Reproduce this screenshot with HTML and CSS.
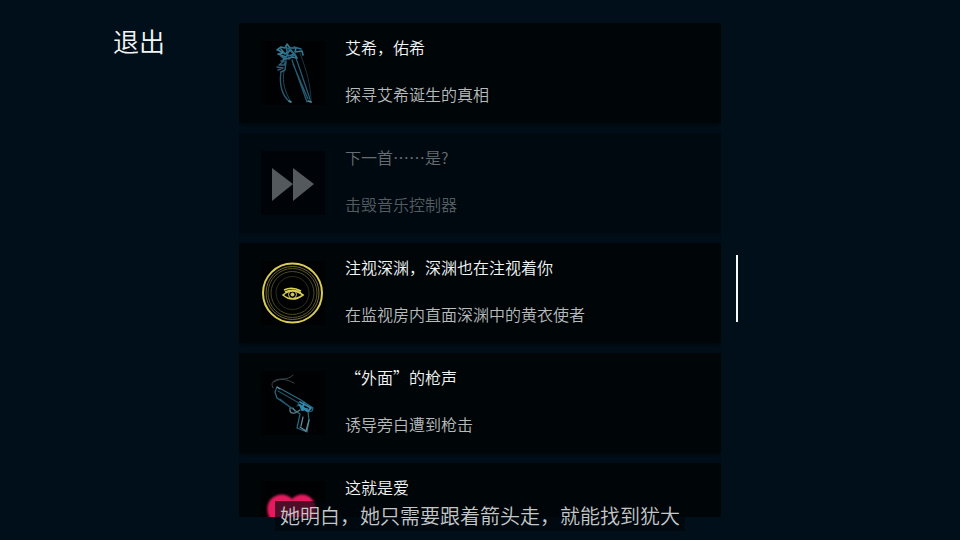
FILE: index.html
```html
<!DOCTYPE html>
<html lang="zh-CN">
<head>
<meta charset="utf-8">
<meta name="viewport" content="width=device-width, initial-scale=1">
<title>成就</title>
<link rel="stylesheet" href="styles.css">
</head>
<body>
<main class="screen">
  <nav class="side"><button class="exit" type="button">退出</button></nav>
  <ul class="list">
    <li class="card">
      <svg class="icon" viewBox="0 0 64 64" aria-hidden="true">
        <g fill="none" stroke="#245a72" stroke-linecap="round" stroke-linejoin="round">
          <path d="M20 31C18 43 21 55 29 61" stroke-width="1.4"/>
          <path d="M23 30C21 42 24 51 30 61" stroke="#1f4759"/>
          <path d="M31 19L46 61M35 17L50 61M32 23L47 58" stroke-width="1.3"/>
          <path d="M39 12C46 31 50 45 50 61" stroke="#1b3541"/>
          <path d="M16 9L20 6L24 7L26 3L29 7L35 7L34 11L41 10L42 14M17 9L22 12L17 13L25 16L22 19L31 16L36 17L30 9L24 13L20 8" stroke="#347891" stroke-width="1.6"/>
          <path d="M25 5L27 15L34 13L28 18M20 15L24 18L28 10M27 7L35 15M33 6L40 8" stroke="#2b6b87" stroke-width="1.6"/>
          <path d="M20 20L23 20L18 24L23 24L25 20L24 29L20 31M16 26L22 27L17 29" stroke="#2c6078" stroke-width="1.5"/>
          <path d="M28 60L30 61M47 60L50 61" stroke="#56879b" stroke-width="1.6"/>
        </g>
      </svg>
      <div class="text"><h2>艾希，佑希</h2><p>探寻艾希诞生的真相</p></div>
    </li>
    <li class="card card-locked">
      <svg class="icon" viewBox="0 0 64 64" aria-hidden="true">
        <path d="M11 17V50L32 33ZM32 17V50L53 33Z" fill="#53595c"/>
      </svg>
      <div class="text"><h2>下一首……是?</h2><p>击毁音乐控制器</p></div>
    </li>
    <li class="card">
      <svg class="icon" viewBox="0 0 64 64" aria-hidden="true">
        <g fill="none" stroke="#d9cd56">
          <circle cx="31.5" cy="32" r="29.5" stroke-width="2"/>
          <circle cx="31.5" cy="32" r="26.5" stroke="#756d31"/>
          <circle cx="31.5" cy="32" r="24.5" stroke="#5c5628"/>
          <circle cx="31.5" cy="32" r="21.5" stroke="#4f4b25"/>
          <circle cx="31.5" cy="32" r="16.5" stroke="#312f19"/>
          <path d="M22 34Q31 26 42 34Q31 42 22 34Z" stroke-width="1.6"/>
          <path d="M23 29Q31 25 40 30M24 31Q32 27 40 32" stroke-width="1.6"/>
          <circle cx="31.5" cy="33.5" r="4"/>
          <circle cx="31.5" cy="33.5" r="1.5" fill="#d9cd56"/>
        </g>
      </svg>
      <div class="text"><h2>注视深渊，深渊也在注视着你</h2><p>在监视房内直面深渊中的黄衣使者</p></div>
    </li>
    <li class="card">
      <svg class="icon" viewBox="0 0 64 64" aria-hidden="true">
        <g fill="none" stroke="#286b84" stroke-width="1.2" stroke-linecap="round" stroke-linejoin="round">
          <path d="M14 21L16 16L20 18L40 29L52 37L51 40L47 41L48 49L46 61L36 57L39 43L32 38L16 27Z"/>
          <path d="M17 20L38 32L36 35M19 28L30 37" stroke="#1e5268"/>
          <path d="M29 37Q28 43 34 42L39 39M32 37L34 40" stroke="#5c8393"/>
          <path d="M39 31L50 37L47 40L39 34L41 39L46 38M38 34L46 40M43 32L41 39" stroke="#2e8baf" stroke-width="1.8"/>
          <path d="M42 46L40 55M16 16L19 18M39 56L45 60L48 49" stroke="#6c8b99"/>
          <path d="M12 17C8 10 16 8 21 8S29 7 32 4M13 11C20 6 27 9 33 12" stroke="#39454a" stroke-width="1"/>
        </g>
      </svg>
      <div class="text"><h2>“外面”的枪声</h2><p>诱导旁白遭到枪击</p></div>
    </li>
    <li class="card">
      <svg class="icon" viewBox="0 0 64 64" aria-hidden="true">
        <path class="heart" d="M31 18C26 12 16 12 10 18C2 27 8 40 17 48L31 60L45 48C55 40 59 27 51 18C46 12 36 12 31 18Z" fill="#e51a5f"/>
      </svg>
      <div class="text"><h2>这就是爱</h2></div>
    </li>
  </ul>
  <div class="track"><div class="thumb"></div></div>
</main>
<p class="subtitle">她明白，她只需要跟着箭头走，就能找到犹大</p>
</body>
</html>
```
FILE: styles.css
```css
* { box-sizing: border-box; }

body {
  margin: 0;
  background: #000f1a;
  color: #f2f5f5;
  font-family: "Noto Sans CJK SC", sans-serif;
  font-weight: 350;
}

.screen {
  display: grid;
  grid-template-columns: 1fr minmax(0, 482px) 1fr;
  height: 100vh;
  padding: 23px 0;
}

.side {
  padding-left: 113px;
}

.exit {
  padding: 0;
  border: 0;
  background: none;
  color: inherit;
  font: inherit;
  font-size: 26px;
  line-height: 36px;
}

.list {
  display: flex;
  flex-direction: column;
  gap: 10px;
  min-height: 0;
  margin: 0;
  padding: 0;
  overflow: hidden;
  list-style: none;
}

.card {
  display: flex;
  flex: none;
  gap: 20px;
  padding: 18px 22px;
  background: #000508;
  box-shadow: 0 2px 4px #00070c;
}

.icon {
  flex: none;
  width: 64px;
  height: 64px;
  background: #000102;
}

.heart {
  filter: blur(1px);
}

.text {
  display: flex;
  flex-direction: column;
  gap: 23px;
  margin: -6px 0;
}

.text h2,
.text p {
  margin: 0;
  font-size: 16px;
  font-weight: inherit;
  line-height: 24px;
}

.text p {
  color: #b7bbbc;
}

.card-locked {
  background: #00090f;
  box-shadow: 0 2px 4px #000b13;
}

.card-locked .icon {
  background: #000408;
}

.card-locked h2 {
  color: #656d71;
}

.card-locked p {
  color: #535c61;
}

.track {
  display: grid;
  grid-template-rows: 232px 67px;
  padding-left: 15px;
}

.thumb {
  grid-row: 2;
  width: 2px;
  background: #f8fbfc;
}

.subtitle {
  position: absolute;
  bottom: 9px;
  left: 50%;
  margin: 0;
  padding: 0 5px;
  background: #00060ba6;
  color: #c4c7c8;
  font-size: 20px;
  line-height: 30px;
  white-space: nowrap;
  transform: translateX(-50%);
}
```
